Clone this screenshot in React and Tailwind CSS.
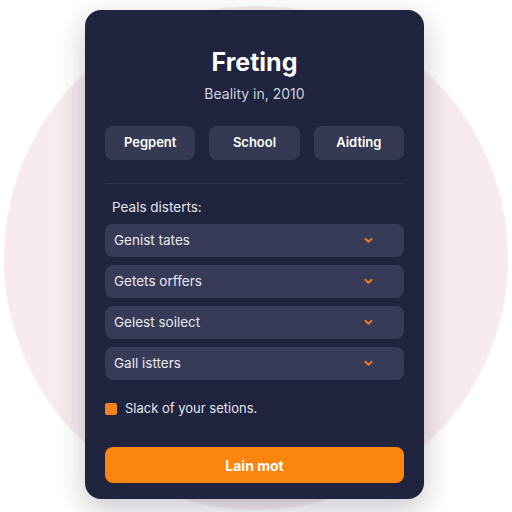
import React from "react";

const tabs = ["Pegpent", "School", "Aidting"];
const rows = ["Genist tates", "Getets orffers", "Gelest soilect", "Gall istters"];

function Chevron() {
  return (
    <svg viewBox="0 0 10 8" className="h-[7px] w-[9px]" fill="none">
      <path
        d="M1.5 2L5 5.5L8.5 2"
        stroke="#f47a1c"
        strokeWidth="2.2"
        strokeLinecap="round"
        strokeLinejoin="round"
      />
    </svg>
  );
}

export default function App() {
  return (
    <div
      className="w-[512px] h-[512px] flex pl-[85px] pt-[10px] bg-[radial-gradient(circle_at_256px_258px,#f7ebef_251px,#ffffff_253px)]"
      style={{ fontFamily: "Inter, 'Noto Sans', sans-serif" }}
    >
      <div className="w-[339px] h-[489px] rounded-2xl bg-[#20243f] px-5 pt-[36px] shadow-[0_10px_30px_rgba(30,30,60,0.25)] flex flex-col">
        <h1 className="text-center text-[25px] leading-[32px] font-bold text-white">
          Freting
        </h1>
        <p className="mt-[6px] text-center text-[14px] leading-5 text-[#cdd0de]">
          Beality in, 2010
        </p>

        <div className="mt-[22px] grid grid-cols-3 gap-[14px]">
          {tabs.map((t) => (
            <div
              key={t}
              className="h-[34px] rounded-lg bg-[#353953] flex items-center justify-center text-[13px] font-semibold text-white"
            >
              {t}
            </div>
          ))}
        </div>

        <div className="mt-[23px] h-px bg-[#2f3350]" />

        <p className="mt-[13px] pl-[7px] text-[13.5px] leading-5 text-[#e3e5ee]">
          Peals disterts:
        </p>

        <div className="mt-[7px] flex flex-col gap-2">
          {rows.map((r) => (
            <div
              key={r}
              className="h-[33px] rounded-lg bg-[#373b57] flex items-center justify-between pl-[9px] pr-[31px] text-[13.5px] text-[#e8e9f1]"
            >
              <span>{r}</span>
              <Chevron />
            </div>
          ))}
        </div>

        <div className="mt-[19px] flex items-center gap-2 h-5">
          <span className="w-3 h-3 rounded-[2px] bg-[#f5821f]" />
          <span className="text-[13px] text-[#e4e5ee]">Slack of your setions.</span>
        </div>

        <button className="mt-[28px] h-9 w-full rounded-lg bg-[#fb850f] text-[14px] font-bold text-white">
          Lain mot
        </button>
      </div>
    </div>
  );
}
